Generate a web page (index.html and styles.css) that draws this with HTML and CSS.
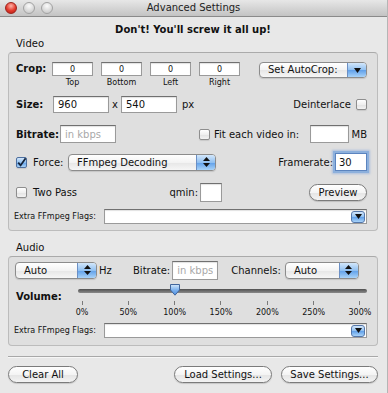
FILE: index.html
```html
<!DOCTYPE html>
<html lang="en">
  <head>
    <meta charset="UTF-8" />
    <meta name="viewport" content="width=device-width, initial-scale=1.0" />
    <title>Advanced Settings</title>
    <link rel="stylesheet" href="styles.css">
  </head>
  <body>
    <div class="window">
      <header class="titlebar">
        <div class="lights">
          <span class="light close"></span>
          <span class="light"></span>
          <span class="light"></span>
        </div>
        <div class="title">Advanced Settings</div>
      </header>

      <main class="content">
        <h1 class="warning">Don't! You'll screw it all up!</h1>

        <!-- Video -->
        <div class="group-title">Video</div>
        <section class="box video-box">
          <div class="row crop-row">
            <span class="bold crop-label">Crop:</span>
            <div class="crop-field"><input class="field crop-input" value="0"><span>Top</span></div>
            <div class="crop-field"><input class="field crop-input" value="0"><span>Bottom</span></div>
            <div class="crop-field"><input class="field crop-input" value="0"><span>Left</span></div>
            <div class="crop-field"><input class="field crop-input" value="0"><span>Right</span></div>
            <div class="popup autocrop">
              <span class="popup-text">Set AutoCrop:</span>
              <span class="popup-arrow">
                <svg width="7" height="5" viewBox="0 0 7 5"><path d="M0 0H7L3.5 5Z" fill="#111"/></svg>
              </span>
            </div>
          </div>

          <div class="row size-row">
            <span class="bold size-label">Size:</span>
            <input class="field size-input" value="960">
            <span class="times">x</span>
            <input class="field size-input" value="540">
            <span class="px">px</span>
            <span class="deinterlace">Deinterlace</span>
            <span class="checkbox deinterlace-box"></span>
          </div>

          <div class="row bitrate-row">
            <span class="bold bitrate-label">Bitrate:</span>
            <input class="field bitrate-input" placeholder="in kbps">
            <div class="fit-group">
              <span class="checkbox"></span>
              <span class="fit-label">Fit each video in:</span>
              <input class="field fit-input">
              <span class="mb">MB</span>
            </div>
          </div>

          <div class="row force-row">
            <div class="force-check">
              <span class="checkbox checked">
                <svg width="11" height="11" viewBox="0 0 11 11"><path d="M2.2 5.6L4.6 8.4L9.6 1.2" fill="none" stroke="#14233a" stroke-width="1.8"/></svg>
              </span>
              <span class="check-label">Force:</span>
            </div>
            <div class="popup force-popup">
              <span class="popup-text">FFmpeg Decoding</span>
              <span class="popup-arrow">
                <svg width="7" height="10" viewBox="0 0 7 10"><path d="M3.5 0L7 4H0Z M0 6H7L3.5 10Z" fill="#111"/></svg>
              </span>
            </div>
            <div class="framerate">
              <span>Framerate:</span>
              <input class="field framerate-input" value="30">
            </div>
          </div>

          <div class="row twopass-row">
            <div class="twopass-group">
              <span class="checkbox"></span>
              <span class="check-label">Two Pass</span>
              <span class="qmin-label">qmin:</span>
              <input class="field qmin-input">
            </div>
            <button class="btn preview">Preview</button>
          </div>

          <div class="row flags-row">
            <span class="flags-label">Extra FFmpeg Flags:</span>
            <div class="combo">
              <input class="combo-input">
              <span class="combo-btn">
                <svg width="7" height="5" viewBox="0 0 7 5"><path d="M0 0H7L3.5 5Z" fill="#111"/></svg>
              </span>
            </div>
          </div>
        </section>

        <!-- Audio -->
        <div class="group-title audio-title">Audio</div>
        <section class="box audio-box">
          <div class="row audio-row">
            <div class="popup hz-popup">
              <span class="popup-text">Auto</span>
              <span class="popup-arrow">
                <svg width="7" height="10" viewBox="0 0 7 10"><path d="M3.5 0L7 4H0Z M0 6H7L3.5 10Z" fill="#111"/></svg>
              </span>
            </div>
            <span class="hz">Hz</span>
            <span>Bitrate:</span>
            <input class="field abitrate-input" placeholder="in kbps">
            <span class="channels-label">Channels:</span>
            <div class="popup channels-popup">
              <span class="popup-text">Auto</span>
              <span class="popup-arrow">
                <svg width="7" height="10" viewBox="0 0 7 10"><path d="M3.5 0L7 4H0Z M0 6H7L3.5 10Z" fill="#111"/></svg>
              </span>
            </div>
          </div>

          <div class="row volume-row">
            <span class="bold volume-label">Volume:</span>
            <div class="slider">
              <div class="slider-track"></div>
              <svg class="slider-knob" width="12" height="12" viewBox="0 0 12 12">
                <defs>
                  <linearGradient id="knob" x1="0" y1="0" x2="0" y2="1">
                    <stop offset="0" stop-color="#d4e8fb"/>
                    <stop offset="0.5" stop-color="#7fb3ee"/>
                    <stop offset="1" stop-color="#4c8de0"/>
                  </linearGradient>
                </defs>
                <path d="M1.5 0.5H10.5V6L6 11.2L1.5 6Z" fill="url(#knob)" stroke="#41659c"/>
              </svg>
              <div class="scale">
                <div class="tick"><i></i><span>0%</span></div>
                <div class="tick"><i></i><span>50%</span></div>
                <div class="tick"><i></i><span>100%</span></div>
                <div class="tick"><i></i><span>150%</span></div>
                <div class="tick"><i></i><span>200%</span></div>
                <div class="tick"><i></i><span>250%</span></div>
                <div class="tick"><i></i><span>300%</span></div>
              </div>
            </div>
          </div>

          <div class="row flags-row audio-flags">
            <span class="flags-label">Extra FFmpeg Flags:</span>
            <div class="combo">
              <input class="combo-input">
              <span class="combo-btn">
                <svg width="7" height="5" viewBox="0 0 7 5"><path d="M0 0H7L3.5 5Z" fill="#111"/></svg>
              </span>
            </div>
          </div>
        </section>

        <div class="separator"></div>

        <div class="buttons">
          <button class="btn clear">Clear All</button>
          <button class="btn load">Load Settings...</button>
          <button class="btn save">Save Settings...</button>
        </div>
      </main>
    </div>
  </body>
</html>
```

FILE: styles.css
```css
* {
  box-sizing: border-box;
}

body {
  margin: 0;
  font-family: "DejaVu Sans", sans-serif;
  font-size: 10px;
  color: #111;
  background-color: #e8e8e8;
}

.window {
  width: 388px;
  height: 393px;
  background-color: #e8e8e8;
  border-right: 1px solid #b5b5b5;
  overflow: hidden;
}

.titlebar {
  height: 17px;
  display: grid;
  grid-template-columns: 1fr auto 1fr;
  align-items: center;
  background: linear-gradient(#e7e7e7, #c3c3c3);
  border-bottom: 1px solid #8a8a8a;
}

.lights {
  display: flex;
  gap: 6px;
  padding-left: 5px;
}

.light {
  width: 12px;
  height: 12px;
  border-radius: 50%;
  border: 1px solid #a2a2a2;
  background: radial-gradient(circle at 50% 30%, #fbfbfb, #cfcfcf 75%);
}

.light.close {
  border-color: #9c231c;
  background: radial-gradient(circle at 50% 30%, #ffb3a8, #e3392c 55%, #b41d15);
}

.title {
  color: #222;
  line-height: 16px;
}

.content {
  padding: 0 9px 0 8px;
}

.warning {
  margin: 7px 0 2px;
  font-size: 10px;
  font-weight: bold;
  line-height: 12px;
  text-align: center;
}

.group-title {
  padding-left: 8px;
  line-height: 12px;
  margin-bottom: 2px;
}

.audio-title {
  margin-top: 11px;
}

.bold {
  font-weight: bold;
}

.box {
  background-color: #dfdfdf;
  border: 1px solid #bcbcbc;
  border-top-color: #aaa;
  border-radius: 4px;
}

.video-box {
  padding: 9px 10px 6px 7px;
}

.audio-box {
  padding: 4px 10px 7px 7px;
}

.row {
  display: flex;
  align-items: center;
  height: 18px;
  white-space: nowrap;
}

/* text fields */
.field {
  height: 17px;
  margin: 0;
  padding: 0 4px;
  font: inherit;
  color: #111;
  background-color: #fff;
  border: 1px solid #9a9a9a;
  border-top-color: #707070;
  border-radius: 0;
  box-shadow: inset 0 1px 1px rgba(0, 0, 0, 0.12);
  outline: none;
}

.field::placeholder {
  color: #a8a8a8;
}

/* crop */
.crop-row {
  height: 28px;
  align-items: flex-start;
}

.crop-label {
  width: 36px;
  line-height: 14px;
}

.crop-field {
  width: 41px;
  display: flex;
  flex-direction: column;
  align-items: center;
}

.crop-field + .crop-field {
  margin-left: 8px;
}

.crop-input {
  width: 41px;
  height: 14px;
  padding: 0;
  font-size: 8px;
  text-align: center;
}

.crop-field span {
  font-size: 8px;
  line-height: 10px;
  margin-top: 2px;
}

/* popup buttons */
.popup {
  display: flex;
  height: 17px;
  border: 1px solid #8c8c8c;
  border-radius: 4px;
  background: linear-gradient(#ffffff, #f3f3f3 50%, #e6e6e6 51%, #f6f6f6);
  box-shadow: 0 1px 1px rgba(0, 0, 0, 0.12);
  overflow: hidden;
}

.popup-text {
  flex: 1;
  padding-left: 8px;
  line-height: 15px;
}

.popup-arrow {
  width: 19px;
  display: flex;
  align-items: center;
  justify-content: center;
  background: linear-gradient(#d3e7fb, #90c0f1 50%, #5f9fe9 51%, #a9d3f8);
  border-left: 1px solid #6b8fc4;
}

.autocrop {
  margin-left: auto;
  width: 108px;
  height: 16px;
}

.autocrop .popup-text {
  line-height: 14px;
}

/* size */
.size-row {
  margin-top: 5px;
}

.size-label {
  width: 37px;
}

.size-input {
  width: 56px;
}

.times {
  width: 12px;
  text-align: center;
}

.px {
  margin-left: 5px;
}

.deinterlace {
  margin-left: auto;
}

.deinterlace-box {
  margin-left: 5px;
}

/* checkboxes */
.checkbox {
  width: 11px;
  height: 11px;
  flex: none;
  display: flex;
  border: 1px solid #8e8e8e;
  border-radius: 2px;
  background: linear-gradient(#ffffff, #f0f0f0 50%, #e2e2e2 51%, #f3f3f3);
  box-shadow: 0 1px 1px rgba(0, 0, 0, 0.1);
}

.checkbox.checked {
  border-color: #4d6f9f;
  background: linear-gradient(#d3e7fb, #90c0f1 50%, #5f9fe9 51%, #a9d3f8);
}

.checkbox svg {
  margin: -1px;
}

.check-label {
  margin-left: 6px;
}

/* bitrate */
.bitrate-row {
  margin-top: 12px;
}

.bitrate-label {
  width: 44px;
}

.bitrate-input {
  width: 56px;
  height: 18px;
}

.fit-group {
  flex: 1;
  display: flex;
  align-items: center;
  margin-left: 83px;
}

.fit-label {
  margin-left: 4px;
}

.fit-input {
  width: 39px;
  height: 18px;
  margin-left: auto;
}

.mb {
  margin-left: 3px;
}

/* force */
.force-row {
  margin-top: 10px;
}

.force-check {
  width: 52px;
  display: flex;
  align-items: center;
}

.force-popup {
  width: 148px;
}

.framerate {
  margin-left: auto;
  display: flex;
  align-items: center;
}

.framerate-input {
  width: 32px;
  height: 18px;
  margin-left: 2px;
  padding-left: 3px;
  border-color: #5b84bf;
  box-shadow: 0 0 0 2px #8db0dc, 0 0 2px 3px rgba(120, 160, 220, 0.5);
}

/* two pass */
.twopass-row {
  margin-top: 12px;
  height: 19px;
}

.twopass-group {
  width: 206px;
  display: flex;
  align-items: center;
}

.qmin-label {
  margin-left: auto;
}

.qmin-input {
  width: 22px;
  height: 19px;
  margin-left: 2px;
}

/* buttons */
.btn {
  height: 17px;
  margin: 0;
  padding: 0;
  font: inherit;
  color: #111;
  line-height: 15px;
  text-align: center;
  border: 1px solid #7b7b7b;
  border-radius: 9px;
  background: linear-gradient(#ffffff, #f4f4f4 50%, #e4e4e4 51%, #f3f3f3);
  box-shadow: 0 1px 1px rgba(0, 0, 0, 0.15);
}

.preview {
  margin-left: auto;
  width: 58px;
}

/* extra flags */
.flags-row {
  margin-top: 7px;
  height: 15px;
}

.flags-label {
  width: 90px;
  margin-left: -2px;
  font-size: 8px;
}

.combo {
  flex: 1;
  height: 15px;
  display: flex;
  align-items: center;
  background-color: #fff;
  border: 1px solid #9a9a9a;
  border-top-color: #707070;
  box-shadow: inset 0 1px 1px rgba(0, 0, 0, 0.12);
}

.combo-input {
  flex: 1;
  min-width: 0;
  height: 100%;
  border: none;
  outline: none;
  background: transparent;
}

.combo-btn {
  width: 14px;
  height: 12px;
  margin-right: 1px;
  display: flex;
  align-items: center;
  justify-content: center;
  border: 1px solid #5577aa;
  border-radius: 3px;
  background: linear-gradient(#d3e7fb, #90c0f1 50%, #5f9fe9 51%, #a9d3f8);
}

/* audio */
.hz-popup {
  width: 82px;
  margin-left: -1px;
}

.hz {
  width: 34px;
  margin-left: 2px;
}

.abitrate-input {
  width: 46px;
  height: 19px;
  margin-left: 2px;
}

.channels-label {
  margin-left: 13px;
}

.channels-popup {
  width: 74px;
  margin-left: 4px;
}

.volume-row {
  margin-top: 4px;
  height: 36px;
  align-items: flex-start;
}

.volume-label {
  width: 62px;
  margin-top: 8px;
  line-height: 12px;
}

.slider {
  position: relative;
  width: 289px;
}

.slider-track {
  height: 4px;
  margin-top: 6px;
  border-radius: 2px;
  background: linear-gradient(#4f4f4f, #8a8a8a);
}

.slider-knob {
  position: absolute;
  left: 91px;
  top: 1px;
}

.scale {
  display: flex;
  justify-content: space-between;
  margin: 8px 7px 0 4px;
}

.tick {
  width: 0;
  display: flex;
  flex-direction: column;
  align-items: center;
}

.tick i {
  width: 1px;
  height: 4px;
  background-color: #7a7a7a;
}

.tick span {
  margin-top: 3px;
  font-size: 8px;
  line-height: 10px;
}

.audio-flags {
  margin-top: 4px;
}

.separator {
  margin-top: 10px;
  height: 1px;
  background-color: #a8a8a8;
  box-shadow: 0 1px 0 #f6f6f6;
}

.buttons {
  display: flex;
  margin-top: 9px;
}

.clear {
  width: 70px;
}

.load {
  width: 98px;
  margin-left: auto;
}

.save {
  width: 97px;
  margin-left: 9px;
}
```
